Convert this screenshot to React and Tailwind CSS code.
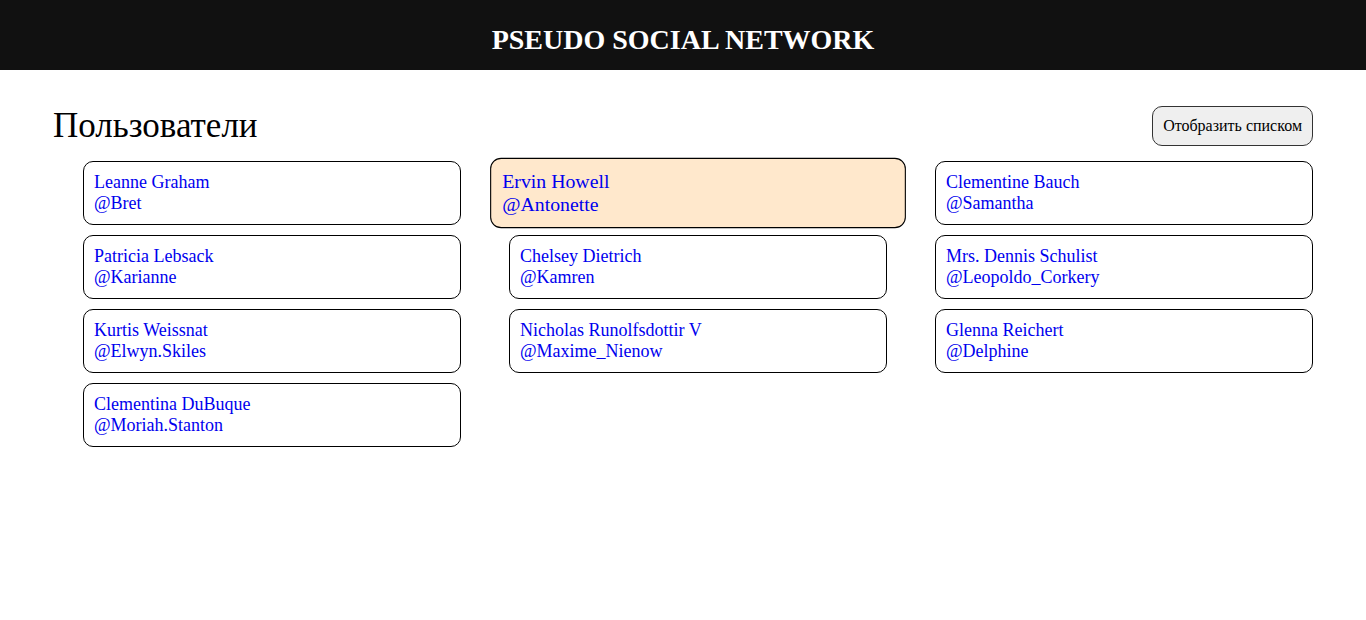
import React from 'react';

const users = [
  { name: 'Leanne Graham', username: 'Bret' },
  { name: 'Ervin Howell', username: 'Antonette', active: true },
  { name: 'Clementine Bauch', username: 'Samantha' },
  { name: 'Patricia Lebsack', username: 'Karianne' },
  { name: 'Chelsey Dietrich', username: 'Kamren' },
  { name: 'Mrs. Dennis Schulist', username: 'Leopoldo_Corkery' },
  { name: 'Kurtis Weissnat', username: 'Elwyn.Skiles' },
  { name: 'Nicholas Runolfsdottir V', username: 'Maxime_Nienow' },
  { name: 'Glenna Reichert', username: 'Delphine' },
  { name: 'Clementina DuBuque', username: 'Moriah.Stanton' },
];

const UserCard = ({ user }) => (
  <div
    className={
      user.active
        ? 'border border-black rounded-[10px] p-[10px] h-[64px] bg-[#ffe8cc] scale-110'
        : 'border border-black rounded-[10px] p-[10px] h-[64px] bg-white'
    }
  >
    <div className="text-[18px] leading-[20.5px] text-[#0000ee]">{user.name}</div>
    <div className="text-[18px] leading-[20.5px] text-[#0000ee]">@{user.username}</div>
  </div>
);

export default function App() {
  return (
    <div className="min-h-[620px] bg-white font-['Liberation_Serif',serif] text-black">
      <header className="h-[70px] bg-[#111111] flex items-center justify-center pt-[10px]">
        <h1 className="text-[28px] font-bold text-white">PSEUDO SOCIAL NETWORK</h1>
      </header>

      <main className="px-[53px]">
        <div className="flex items-center justify-between pt-[36px]">
          <h2 className="text-[35px] leading-[40px]">Пользователи</h2>
          <button className="h-[40px] px-[10px] text-[16px] bg-[#efefef] border border-[#333333] rounded-[10px]">
            Отобразить списком
          </button>
        </div>

        <div className="grid grid-cols-3 gap-x-[48px] gap-y-[10px] pl-[30px] mt-[15px]">
          {users.map((user, i) => (
            <UserCard key={i} user={user} />
          ))}
        </div>
      </main>
    </div>
  );
}
